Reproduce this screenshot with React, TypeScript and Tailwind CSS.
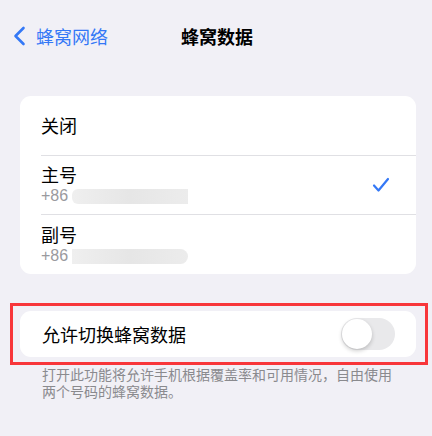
import React from "react";

const font = { fontFamily: '"Noto Sans CJK SC", "Liberation Sans", sans-serif' };

function BackChevron() {
  return (
    <svg width="13" height="20" viewBox="0 0 13 20" fill="none" aria-hidden>
      <path d="M10.5 2 L2.5 10 L10.5 18" stroke="#3478f6" strokeWidth="2.6" strokeLinecap="round" strokeLinejoin="round" />
    </svg>
  );
}

function Check() {
  return (
    <svg width="18" height="16" viewBox="0 0 18 16" fill="none" aria-hidden>
      <path d="M2 8.5 L6.5 13.5 L16 2" stroke="#3478f6" strokeWidth="2.2" strokeLinecap="round" strokeLinejoin="round" />
    </svg>
  );
}

function Masked({ pill }: { pill?: boolean }) {
  return (
    <div
      className={`ml-1 h-[15px] w-[116px] bg-gradient-to-r from-[#efefef] via-[#e6e6e6] to-[#ececec] blur-[0.6px] ${
        pill ? "rounded-r-full rounded-l-lg" : "rounded-l-md"
      }`}
    />
  );
}

export default function App() {
  return (
    <div className="w-[432px] h-[436px] bg-[#f1f0f6] overflow-hidden" style={font}>
      {/* nav bar */}
      <div className="relative flex items-center h-[36px] mt-[18px]">
        <div className="flex items-center pl-[13px] gap-[10px] text-[#3478f6] text-[18px]">
          <BackChevron />
          <span>蜂窝网络</span>
        </div>
        <div className="absolute left-0 right-0 text-center pointer-events-none">
          <span className="ml-[2px] text-[18px] font-bold text-black">蜂窝数据</span>
        </div>
      </div>

      {/* sim selection */}
      <div className="ml-[20px] mr-[16px] mt-[42px] h-[178px] bg-white rounded-[11px] overflow-hidden">
        <div className="flex items-center h-[59px] pl-[21px] text-[18px] text-black">关闭</div>
        <div className="ml-[21px] h-px bg-[#e0e0e4]" />
        <div className="flex items-center justify-between h-[58px] pl-[21px] pr-[26px]">
          <div className="flex flex-col">
            <span className="text-[18px] leading-[22px] text-black">主号</span>
            <div className="flex items-center h-[22px]">
              <span className="text-[16px] text-[#9a9a9e]" style={{ fontFamily: '"Liberation Sans", sans-serif' }}>+86</span>
              <Masked />
            </div>
          </div>
          <Check />
        </div>
        <div className="ml-[21px] h-px bg-[#e0e0e4]" />
        <div className="flex flex-col justify-center h-[60px] pl-[21px]">
          <span className="text-[18px] leading-[22px] text-black">副号</span>
          <div className="flex items-center h-[22px]">
            <span className="text-[16px] text-[#9a9a9e]" style={{ fontFamily: '"Liberation Sans", sans-serif' }}>+86</span>
            <Masked pill />
          </div>
        </div>
      </div>

      {/* switching */}
      <div className="ml-[10px] mr-[4px] mt-[29px] border-[3px] border-[#f8363a] pl-[7px] pr-[9px] py-[5px]">
        <div className="flex items-center justify-between h-[46px] bg-white rounded-[11px] pl-[22px] pr-[21px]">
          <span className="text-[18px] text-black">允许切换蜂窝数据</span>
          <div className="relative w-[54px] h-[32px] rounded-full bg-[#e9e9eb]">
            <div className="absolute left-[1px] top-[1px] w-[30px] h-[30px] rounded-full bg-white shadow-[0_2px_4px_rgba(0,0,0,0.2)]" />
          </div>
        </div>
      </div>
      <div className="mt-[1px] ml-[42px] whitespace-nowrap text-[14px] leading-[17px] text-[#8a8a8e]">
        <p>打开此功能将允许手机根据覆盖率和可用情况，自由使用</p>
        <p>两个号码的蜂窝数据。</p>
      </div>
    </div>
  );
}
